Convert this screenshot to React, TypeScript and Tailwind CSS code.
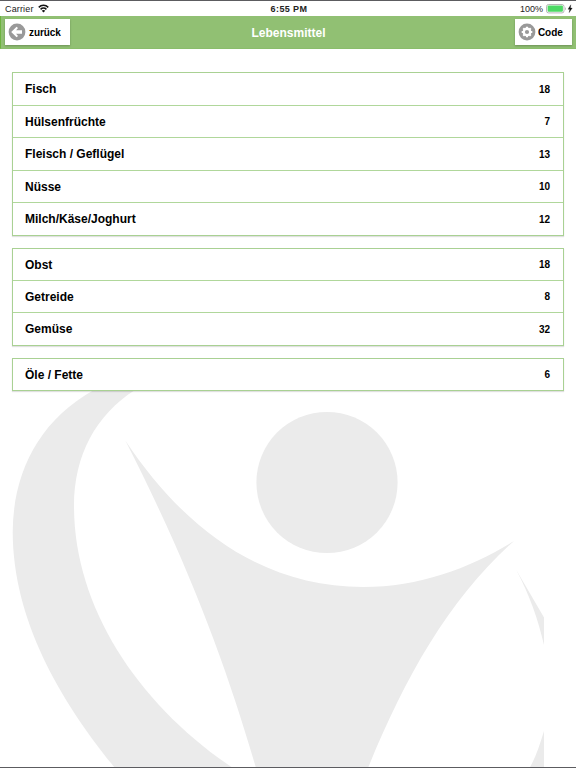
type Row = { name: string; count: number; height: string };

const groups: { gap: string; rows: Row[] }[] = [
  {
    gap: "mt-[23px]",
    rows: [
      { name: "Fisch", count: 18, height: "h-[33px]" },
      { name: "Hülsenfrüchte", count: 7, height: "h-8" },
      { name: "Fleisch / Geflügel", count: 13, height: "h-[33px]" },
      { name: "Nüsse", count: 10, height: "h-8" },
      { name: "Milch/Käse/Joghurt", count: 12, height: "h-8" },
    ],
  },
  {
    gap: "mt-3",
    rows: [
      { name: "Obst", count: 18, height: "h-8" },
      { name: "Getreide", count: 8, height: "h-8" },
      { name: "Gemüse", count: 32, height: "h-8" },
    ],
  },
  { gap: "mt-3", rows: [{ name: "Öle / Fette", count: 6, height: "h-[31px]" }] },
];

function WifiIcon() {
  return (
    <svg width="11" height="9" viewBox="0 0 12 9" preserveAspectRatio="none" fill="none" stroke="#111" strokeWidth="1.6">
      <path d="M0.8 3.4C3.7 0.5 8.3 0.5 11.2 3.4" />
      <path d="M2.8 5.4C4.6 3.7 7.4 3.7 9.2 5.4" />
      <path d="M4.1 6.7C5.2 5.7 6.8 5.7 7.9 6.7L6 8.6Z" fill="#111" stroke="none" />
    </svg>
  );
}

function BatteryIcon() {
  return (
    <svg width="27" height="10" viewBox="0 0 27 10">
      <rect x="0.5" y="0.5" width="17.5" height="8.4" rx="2" fill="#fff" stroke="#a5a5a5" strokeWidth="0.8" />
      <rect x="1.6" y="1.6" width="15.3" height="6.2" rx="1" fill="#4cd964" />
      <path d="M19 3.2C20 3.6 20 5.8 19 6.2Z" fill="#a5a5a5" />
      <path d="M24.8 0.8L22 5.2H23.8L23.2 8.6L26.2 4.1H24.4Z" fill="#111" stroke="#111" strokeWidth="0.3" />
    </svg>
  );
}

function BackIcon() {
  return (
    <svg width="18" height="18" viewBox="0 0 18 18">
      <circle cx="9" cy="9" r="8.4" fill="#999" />
      <path d="M3.2 9L8.6 3.7L10 5.1L8.1 7.2H14V10.8H8.1L10 12.9L8.6 14.3Z" fill="#fff" />
    </svg>
  );
}

function GearIcon() {
  return (
    <svg width="18" height="18" viewBox="0 0 18 18">
      <circle cx="9" cy="9" r="8.4" fill="#999" />
      <circle cx="9" cy="9" r="4.4" fill="#fff" />
      <path d="M9 3.7V14.3M3.7 9H14.3M5.25 5.25L12.75 12.75M12.75 5.25L5.25 12.75" stroke="#fff" strokeWidth="2.1" />
      <circle cx="9" cy="9" r="2.1" fill="#999" />
    </svg>
  );
}

function Watermark() {
  return (
    <svg className="absolute inset-0" width="576" height="768" viewBox="0 0 576 768" fill="#ebebeb">
      <path d="M94 390C38 421 13 474 12.7 532C13 622 62 703 115 768H233C139 705 74 608 74 506C74 455 96 415 135 390Z" />
      <circle cx="327" cy="482.5" r="70.6" />
      <path d="M125.3 440.5C186 532 265 587 363 587C421 587 472 567 514 541C448 600 405 678 368 768H256C226 665 189 565 125.3 440.5Z" />
      <path d="M516 569.5L544 617.5V645C538 619 530 596 516 569.5Z" />
      <path d="M544 731C540 744 536 757 529.5 768H544Z" />
    </svg>
  );
}

export default function App() {
  return (
    <div className="relative flex h-[768px] w-[576px] flex-col overflow-hidden border-y border-[#5c5c60] bg-white font-['Liberation_Sans',Arial,sans-serif] text-black">
      <div className="absolute inset-x-0 -top-px h-[768px]">
        <Watermark />
      </div>
      <div className="relative grid h-[15px] grid-cols-3 items-center pl-[5px] pr-[3px] text-[9px] leading-[14px] text-[#222]">
        <div className="flex items-center gap-1">
          <span className="tracking-[0.15px]">Carrier</span>
          <WifiIcon />
        </div>
        <span className="text-center font-bold tracking-[0.4px]">6:55 PM</span>
        <div className="flex items-center justify-end gap-[3px]">
          <span>100%</span>
          <BatteryIcon />
        </div>
      </div>
      <header className="relative grid h-[33px] grid-cols-3 items-start border-b border-l border-b-[#8abd6b] border-l-[#6db33f] bg-[#91c073] pl-1 pr-1 pt-[3px]">
        <button className="flex h-[26px] w-[65px] items-center gap-[3px] bg-white pl-[3px] text-[10px] font-bold tracking-[-0.1px] shadow-[0_1px_2px_rgba(0,0,0,0.25)]">
          <BackIcon />
          zurück
        </button>
        <h1 className="text-center text-[12px] font-bold leading-[28px] text-white">Lebensmittel</h1>
        <button className="flex h-[26px] w-[57px] items-center gap-[2px] justify-self-end bg-white pl-[3px] text-[10px] font-bold tracking-[-0.1px] shadow-[0_1px_2px_rgba(0,0,0,0.25)]">
          <GearIcon />
          Code
        </button>
      </header>
      <main className="relative flex flex-col px-3">
        {groups.map((group, i) => (
          <ul
            key={i}
            className={`${group.gap} divide-y divide-[#b0d79b] border border-[#a9d193] bg-white shadow-[0_1px_1px_rgba(0,0,0,0.12)]`}
          >
            {group.rows.map((row) => (
              <li key={row.name} className={`${row.height} flex items-center justify-between pl-3 pr-[13px] font-bold`}>
                <span className="text-[12px]">{row.name}</span>
                <span className="text-[10px]">{row.count}</span>
              </li>
            ))}
          </ul>
        ))}
      </main>
    </div>
  );
}
